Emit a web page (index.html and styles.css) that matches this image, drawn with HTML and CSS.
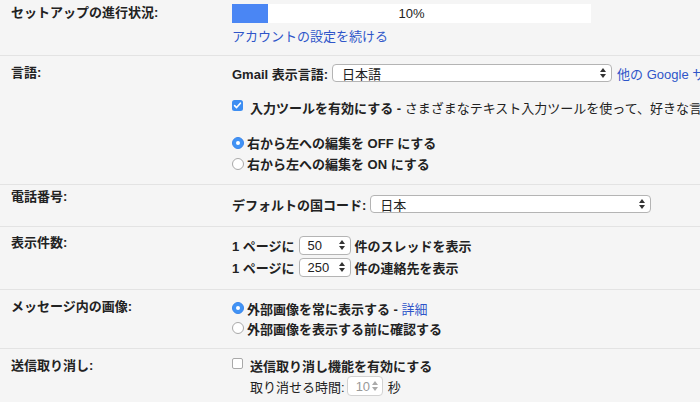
FILE: index.html
```html
<!DOCTYPE html>
<html lang="ja">
<head>
<meta charset="utf-8">
<title>設定</title>
<link rel="stylesheet" href="styles.css">
</head>
<body>
<div class="settings">

  <div class="row r1">
    <div class="label">セットアップの進行状況:</div>
    <div class="content">
      <div class="progress">
        <div class="fill" style="width:10%"></div>
        <span class="pct">10%</span>
      </div>
      <a class="link cont">アカウントの設定を続ける</a>
    </div>
  </div>

  <div class="row r2">
    <div class="label">言語:</div>
    <div class="content">
      <div class="line l18">
        <b>Gmail 表示言語:</b>
        <span class="select s-lang"><span>日本語</span><svg class="arr" width="6" height="10" viewBox="0 0 6 10"><path d="M0 4L3 0L6 4Z M0 6L3 10L6 6Z" fill="#333"/></svg></span>
        <a class="link other">他の Google サービスの言語を変更</a>
      </div>
      <div class="line l16 cbl">
        <svg class="cb" width="11" height="11" viewBox="0 0 11 11"><rect x="0" y="0" width="11" height="11" rx="2.5" fill="#3d8ef2"/><path d="M2.6 5.6L4.6 7.6L8.4 3.2" fill="none" stroke="#fff" stroke-width="1.6" stroke-linecap="round" stroke-linejoin="round"/></svg>
        <b>入力ツールを有効にする</b><span>&nbsp;<b>-</b> さまざまなテキスト入力ツールを使って、好きな言語で入力できます</span>
      </div>
      <div class="radios">
        <div class="line l21"><span class="radio on"></span><b>右から左への編集を OFF にする</b></div>
        <div class="line l21"><span class="radio"></span><b>右から左への編集を ON にする</b></div>
      </div>
    </div>
  </div>

  <div class="row r3">
    <div class="label">電話番号:</div>
    <div class="content">
      <div class="line l18">
        <b>デフォルトの国コード:</b>
        <span class="select s-country"><span>日本</span><svg class="arr" width="6" height="10" viewBox="0 0 6 10"><path d="M0 4L3 0L6 4Z M0 6L3 10L6 6Z" fill="#333"/></svg></span>
      </div>
    </div>
  </div>

  <div class="row r4">
    <div class="label">表示件数:</div>
    <div class="content">
      <div class="line l22">
        <b>1 ページに</b>
        <span class="select s-num"><span>50</span><svg class="arr" width="6" height="10" viewBox="0 0 6 10"><path d="M0 4L3 0L6 4Z M0 6L3 10L6 6Z" fill="#333"/></svg></span>
        <b>件のスレッドを表示</b>
      </div>
      <div class="line l22">
        <b>1 ページに</b>
        <span class="select s-num"><span>250</span><svg class="arr" width="6" height="10" viewBox="0 0 6 10"><path d="M0 4L3 0L6 4Z M0 6L3 10L6 6Z" fill="#333"/></svg></span>
        <b>件の連絡先を表示</b>
      </div>
    </div>
  </div>

  <div class="row r5">
    <div class="label">メッセージ内の画像:</div>
    <div class="content">
      <div class="line l20"><span class="radio on"></span><b>外部画像を常に表示する -</b>&nbsp;<a class="link">詳細</a></div>
      <div class="line l20"><span class="radio"></span><b>外部画像を表示する前に確認する</b></div>
    </div>
  </div>

  <div class="row r6">
    <div class="label">送信取り消し:</div>
    <div class="content">
      <div class="line l20 cbl">
        <span class="cb-empty"></span>
        <b>送信取り消し機能を有効にする</b>
      </div>
      <div class="line l22 indent">
        <span>取り消せる時間:</span>
        <span class="select s-sec disabled"><span>10</span><svg class="arr" width="6" height="10" viewBox="0 0 6 10"><path d="M0 4L3 0L6 4Z M0 6L3 10L6 6Z" fill="#aaa"/></svg></span>
        <span>秒</span>
      </div>
    </div>
  </div>

</div>
</body>
</html>
```

FILE: styles.css
```css
html, body {
  margin: 0;
  padding: 0;
}

body {
  width: 700px;
  height: 402px;
  overflow: hidden;
  background: #f5f5f5;
  font-family: "Liberation Sans", Arial, "Noto Sans CJK JP", sans-serif;
  font-size: 13px;
  color: #222;
}

b {
  font-weight: bold;
}

.settings {
  width: 700px;
}

.row {
  display: grid;
  grid-template-columns: 232px minmax(0, 1fr);
  border-bottom: 1px solid #e3e3e3;
}

.label {
  padding-left: 11px;
  font-weight: bold;
  line-height: 16px;
  white-space: nowrap;
}

.content {
  white-space: nowrap;
  min-width: 0;
}

.line {
  display: flex;
  align-items: center;
}

.line > * {
  flex: none;
}

.l16 { height: 16px; }
.l18 { height: 18px; }
.l20 { height: 20px; }
.l21 { height: 21px; }
.l22 { height: 22px; }

.link {
  color: #2f55c9;
  text-decoration: none;
  font-weight: normal;
}

/* row 1 */
.r1 .label { padding-top: 5px; }
.r1 .content { padding: 4px 0 10px; }

.progress {
  display: grid;
  width: 359px;
  height: 19px;
  background: #fff;
}

.progress > * {
  grid-area: 1 / 1;
}

.fill {
  height: 19px;
  background: #4a86f4;
}

.pct {
  justify-self: center;
  align-self: center;
  line-height: 19px;
}

.cont {
  display: block;
  margin-top: 6px;
  line-height: 16px;
}

/* selects */
.select {
  display: inline-flex;
  align-items: center;
  justify-content: space-between;
  box-sizing: border-box;
  height: 18px;
  background: #fff;
  border: 1px solid #b4b4b4;
  border-radius: 4px;
  padding: 0 5px 0 9px;
  font-weight: normal;
  color: #222;
}

.arr {
  display: block;
  flex: none;
}

.s-lang {
  width: 280px;
  margin-left: 4px;
}

.other {
  margin-left: 5px;
}

.s-country {
  width: 281px;
  margin-left: 4px;
}

.s-num {
  width: 52px;
  margin: 0 4px;
  padding-left: 8px;
  height: 19px;
}

.s-sec {
  width: 36px;
  height: 20px;
  margin: 0 5px 0 2px;
  padding: 0 4px 0 8px;
}

.s-sec.disabled {
  border-color: #d2d2d2;
  color: #999;
}

/* row 2 */
.r2 .label { padding-top: 9px; }
.r2 .content { padding: 8px 0 10px; }

.cbl {
  margin-top: 17px;
}

.cb {
  margin-right: 7px;
  align-self: flex-start;
  margin-top: 1px;
}

.radios {
  margin-top: 17px;
}

.radio {
  box-sizing: border-box;
  width: 12px;
  height: 12px;
  border-radius: 50%;
  border: 1px solid #a9a9a9;
  background: #fff;
  margin-right: 3px;
  display: flex;
  align-items: center;
  justify-content: center;
}

.radio.on {
  border-color: #3a86ec;
  background: #4193f5;
}

.radio.on::after {
  content: "";
  width: 4px;
  height: 4px;
  border-radius: 50%;
  background: #fff;
}

/* row 3 */
.r3 .label { padding-top: 4px; }
.r3 .content { padding: 10px 0 13px; }

/* row 4 */
.r4 .label { padding-top: 8px; }
.r4 .content { padding: 7px 0 11px; }

/* row 5 */
.r5 .label { padding-top: 9px; }
.r5 .content { padding: 8px 0 10px; }

/* row 6 */
.r6 { border-bottom: none; }
.r6 .label { padding-top: 9px; }
.r6 .content { padding: 6px 0 6px; }

.r6 .cbl {
  margin-top: 0;
}

.cb-empty {
  box-sizing: border-box;
  width: 11px;
  height: 11px;
  border: 1px solid #a9a9a9;
  border-radius: 2px;
  background: #fff;
  margin-right: 7px;
  align-self: flex-start;
  margin-top: 3px;
}

.indent {
  padding-left: 18px;
}
```
